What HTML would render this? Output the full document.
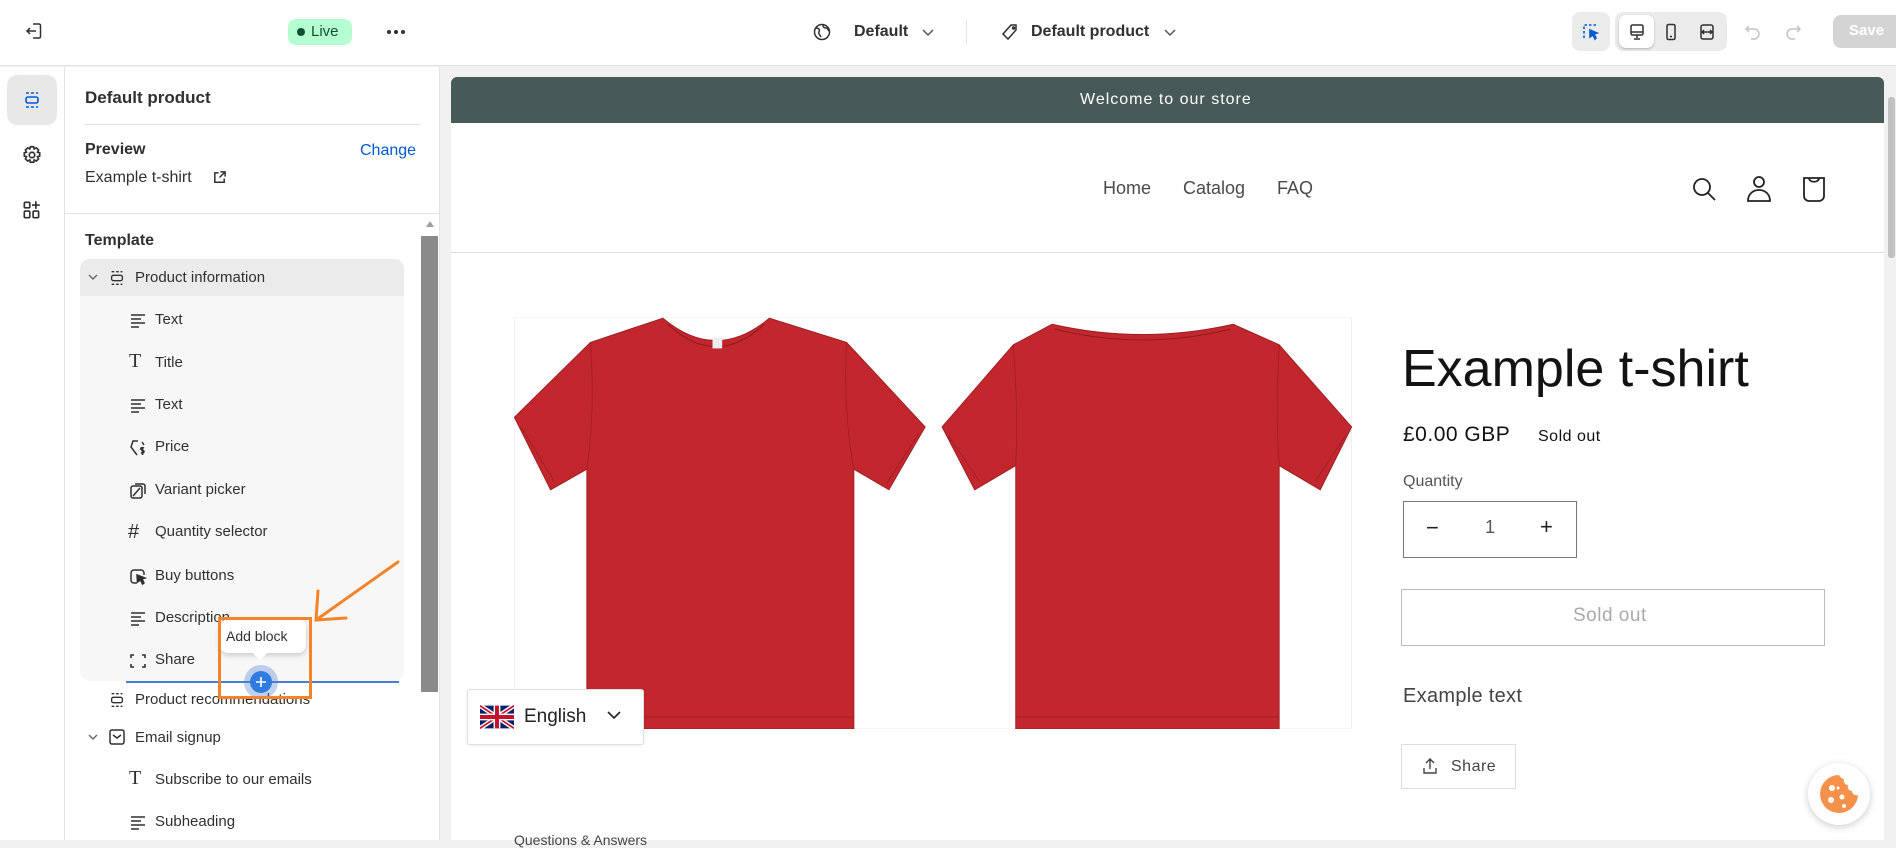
<!DOCTYPE html>
<html><head><meta charset="utf-8"><style>
*{box-sizing:border-box;margin:0;padding:0}
body{width:1896px;height:840px;overflow:hidden;background:#f1f1f1;font-family:"Liberation Sans",sans-serif;color:#303030;position:relative}
.a{position:absolute}
.t{position:absolute;white-space:nowrap}
svg{display:block}
.ico{position:absolute}
.it{position:absolute;font-size:15px;color:#303030;white-space:nowrap}
.sf{font-family:"Liberation Sans",sans-serif;color:#4a4a4a}
</style></head><body>
<!-- top bar -->
<div class="a" style="left:0;top:0;width:1896px;height:66px;background:#fff;border-bottom:1px solid #e3e3e3"></div>
<svg class="ico" style="left:24px;top:21px" width="20" height="20" viewBox="0 0 20 20" fill="none" stroke="#303030" stroke-width="1.5"><path d="M9 3h6a1.5 1.5 0 0 1 1.5 1.5v11A1.5 1.5 0 0 1 15 17H9"/><path d="M12 10H3M6 7l-3 3 3 3"/></svg>
<div class="a" style="left:288px;top:19px;width:64px;height:26px;background:#b4fed2;border-radius:8px"></div>
<div class="a" style="left:297px;top:28px;width:8px;height:8px;border-radius:50%;background:#0c5132"></div>
<div class="t" style="left:311px;top:23px;font-size:15px;color:#0c5132">Live</div>
<div class="a" style="left:387px;top:30px;width:4px;height:4px;border-radius:50%;background:#303030"></div>
<div class="a" style="left:394px;top:30px;width:4px;height:4px;border-radius:50%;background:#303030"></div>
<div class="a" style="left:401px;top:30px;width:4px;height:4px;border-radius:50%;background:#303030"></div>
<svg class="ico" style="left:812px;top:22px" width="20" height="20" viewBox="0 0 20 20" fill="none" stroke="#303030" stroke-width="1.5"><circle cx="10" cy="10" r="7.5"/><path d="M4 6c3 0 4 2 3 4s1 3 2 5M11 3c0 2 1 3 3 3s2 2 3 3"/></svg>
<div class="t" style="left:854px;top:23px;font-size:16px;font-weight:bold">Default</div>
<svg class="ico" style="left:921px;top:28px" width="14" height="10" viewBox="0 0 14 10" fill="none" stroke="#555" stroke-width="1.5"><path d="M2 2l5 5 5-5"/></svg>
<div class="a" style="left:966px;top:20px;width:1px;height:24px;background:#e3e3e3"></div>
<svg class="ico" style="left:1000px;top:22px" width="20" height="20" viewBox="0 0 20 20" fill="none" stroke="#303030" stroke-width="1.5"><path d="M11 3h5v5l-8 9-5-5z"/><circle cx="13.5" cy="6" r="1"/></svg>
<div class="t" style="left:1031px;top:23px;font-size:16px;font-weight:bold">Default product</div>
<svg class="ico" style="left:1163px;top:28px" width="14" height="10" viewBox="0 0 14 10" fill="none" stroke="#555" stroke-width="1.5"><path d="M2 2l5 5 5-5"/></svg>
<div class="a" style="left:1572px;top:12px;width:38px;height:39px;background:#ebebeb;border-radius:8px"></div>
<svg class="ico" style="left:1581px;top:22px" width="20" height="20" viewBox="0 0 20 20" fill="none" stroke="#005bd3" stroke-width="1.6" stroke-dasharray="2.5 2"><path d="M3 16V3h13"/><path d="M9 8l7 3-3 1 2 4-1 1-2-4-3 2z" fill="#005bd3" stroke-dasharray="0"/></svg>
<div class="a" style="left:1615px;top:12px;width:112px;height:39px;background:#ebebeb;border-radius:8px"></div>
<div class="a" style="left:1619px;top:15px;width:35px;height:33px;background:#fff;border-radius:7px;box-shadow:0 1px 2px rgba(0,0,0,.25)"></div>
<svg class="ico" style="left:1627px;top:22px" width="20" height="20" viewBox="0 0 20 20" fill="none" stroke="#303030" stroke-width="1.5"><rect x="4" y="3" width="12" height="10" rx="1.5"/><path d="M4 10h12M10 13v3M7 17h6"/></svg>
<svg class="ico" style="left:1661px;top:22px" width="20" height="20" viewBox="0 0 20 20" fill="none" stroke="#303030" stroke-width="1.5"><rect x="6" y="2.5" width="8" height="15" rx="1.5"/><path d="M9 14.5h2"/></svg>
<svg class="ico" style="left:1697px;top:22px" width="20" height="20" viewBox="0 0 20 20" fill="none" stroke="#303030" stroke-width="1.5"><rect x="4" y="3" width="12" height="14" rx="2"/><path d="M4 10h12M7 8l-2 2 2 2M13 8l2 2-2 2"/></svg>
<svg class="ico" style="left:1744px;top:22px" width="18" height="20" viewBox="0 0 18 20" fill="none" stroke="#c4c4c4" stroke-width="1.5"><path d="M5 4L2 7l3 3M2 7h8a5 5 0 0 1 0 10H7"/></svg>
<svg class="ico" style="left:1784px;top:22px" width="18" height="20" viewBox="0 0 18 20" fill="none" stroke="#c4c4c4" stroke-width="1.5"><path d="M13 4l3 3-3 3M16 7H8a5 5 0 0 0 0 10h3"/></svg>
<div class="a" style="left:1833px;top:15px;width:70px;height:33px;background:#d4d4d4;border-radius:8px"></div>
<div class="t" style="left:1849px;top:22px;font-size:15px;font-weight:bold;color:#fff">Save</div>

<!-- left rail -->
<div class="a" style="left:0;top:67px;width:65px;height:773px;background:#fff;border-right:1px solid #e3e3e3"></div>
<div class="a" style="left:7px;top:75px;width:50px;height:50px;background:#e8e8e8;border-radius:10px"></div>
<svg class="ico" style="left:22px;top:90px" width="20" height="20" viewBox="0 0 20 20" fill="none" stroke="#005bd3" stroke-width="1.6"><path d="M4 3h12M4 17h12" stroke-dasharray="3 2"/><rect x="4" y="7" width="12" height="6" rx="2"/></svg>
<svg class="ico" style="left:21px;top:144px" width="22" height="22" viewBox="0 0 20 20" fill="none" stroke="#303030" stroke-width="1.5"><circle cx="10" cy="10" r="2.5"/><path d="M8.5 2.5h3l.5 2 2-1 2 2-1 2 2 .5v3l-2 .5 1 2-2 2-2-1-.5 2h-3l-.5-2-2 1-2-2 1-2-2-.5v-3l2-.5-1-2 2-2 2 1z"/></svg>
<svg class="ico" style="left:21px;top:199px" width="22" height="22" viewBox="0 0 20 20" fill="none" stroke="#303030" stroke-width="1.5"><rect x="3" y="3" width="5" height="5" rx="1"/><rect x="3" y="11" width="5" height="6" rx="1"/><rect x="11" y="11" width="5" height="6" rx="1"/><path d="M13.5 2v7M10 5.5h7"/></svg>

<!-- panel -->
<div class="a" style="left:65px;top:67px;width:375px;height:773px;background:#fff;border-right:1px solid #e3e3e3"></div>
<div class="t" style="left:85px;top:88px;font-size:17px;font-weight:bold;color:#303030">Default product</div>
<div class="a" style="left:85px;top:124px;width:335px;height:1px;background:#e3e3e3"></div>
<div class="t" style="left:85px;top:141px;font-size:16px;font-weight:bold">Preview</div>
<div class="t" style="left:360px;top:142px;font-size:16px;color:#005bd3">Change</div>
<div class="t" style="left:85px;top:169px;font-size:16px">Example t-shirt</div>
<svg class="ico" style="left:212px;top:170px" width="15" height="15" viewBox="0 0 16 16" fill="none" stroke="#303030" stroke-width="1.6"><path d="M7 3H3v10h10V9M9 2h5v5M14 2L8 8"/></svg>
<div class="a" style="left:65px;top:213px;width:374px;height:1px;background:#e3e3e3"></div>
<div class="t" style="left:85px;top:232px;font-size:16px;font-weight:bold">Template</div>
<!-- scrollbar -->
<div class="a" style="left:421px;top:214px;width:17px;height:626px;background:#fff"></div>
<div class="a" style="left:426px;top:221px;width:0;height:0;border-left:4px solid transparent;border-right:4px solid transparent;border-bottom:6px solid #a0a0a0"></div>
<div class="a" style="left:421px;top:236px;width:17px;height:456px;background:#8a8a8a"></div>
<!-- group -->
<div class="a" style="left:80px;top:259px;width:324px;height:422px;background:#f7f7f7;border-radius:10px"></div>
<div class="a" style="left:80px;top:259px;width:324px;height:37px;background:#ebebeb;border-radius:10px 10px 0 0"></div>
<svg class="ico" style="left:87px;top:273px" width="12" height="10" viewBox="0 0 12 10" fill="none" stroke="#666" stroke-width="1.4"><path d="M2 2l4 4 4-4"/></svg>
<svg class="ico" style="left:108px;top:268px" width="18" height="20" viewBox="0 0 20 20" fill="none" stroke="#303030" stroke-width="1.5"><path d="M4 3h12M4 17h12" stroke-dasharray="3 2"/><rect x="4" y="7" width="12" height="6" rx="2"/></svg>
<div class="it" style="left:135px;top:269px">Product information</div>

<svg class="ico" style="left:129px;top:312px" width="18" height="18" viewBox="0 0 18 18" fill="none" stroke="#303030" stroke-width="1.6"><path d="M2 3h14M2 7h10M2 11h14M2 15h8"/></svg>
<div class="it" style="left:155px;top:311px">Text</div>
<div class="t" style="left:129px;top:350px;font-size:20px;font-family:'Liberation Serif',serif">T</div>
<div class="it" style="left:155px;top:354px">Title</div>
<svg class="ico" style="left:129px;top:397px" width="18" height="18" viewBox="0 0 18 18" fill="none" stroke="#303030" stroke-width="1.6"><path d="M2 3h14M2 7h10M2 11h14M2 15h8"/></svg>
<div class="it" style="left:155px;top:396px">Text</div>
<svg class="ico" style="left:129px;top:439px" width="18" height="18" viewBox="0 0 18 18" fill="none" stroke="#303030" stroke-width="1.5"><path d="M9 2H4L2 8l6 8M13 3l2 3"/><path d="M15 9c-2-1-4 0-3 1.5s3 .5 3 2-2 2-3 1M13.5 8v8"/></svg>
<div class="it" style="left:155px;top:438px">Price</div>
<svg class="ico" style="left:129px;top:482px" width="18" height="18" viewBox="0 0 18 18" fill="none" stroke="#303030" stroke-width="1.5"><rect x="2" y="4" width="11" height="12" rx="2"/><path d="M6 2h8a2 2 0 0 1 2 2v8M4 14l7-8"/></svg>
<div class="it" style="left:155px;top:481px">Variant picker</div>
<div class="t" style="left:128px;top:521px;font-size:20px">#</div>
<div class="it" style="left:155px;top:523px">Quantity selector</div>
<svg class="ico" style="left:129px;top:568px" width="18" height="18" viewBox="0 0 18 18" fill="none" stroke="#303030" stroke-width="1.5"><path d="M8 15H5a3 3 0 0 1-3-3V5a3 3 0 0 1 3-3h7a3 3 0 0 1 3 3v2"/><path d="M8 7l8 3-3 1 2 4-1.5 1-2-4-3 2z" fill="#303030"/></svg>
<div class="it" style="left:155px;top:567px">Buy buttons</div>
<svg class="ico" style="left:129px;top:610px" width="18" height="18" viewBox="0 0 18 18" fill="none" stroke="#303030" stroke-width="1.6"><path d="M2 3h14M2 7h10M2 11h14M2 15h8"/></svg>
<div class="it" style="left:155px;top:609px">Description</div>
<svg class="ico" style="left:129px;top:652px" width="18" height="18" viewBox="0 0 18 18" fill="none" stroke="#303030" stroke-width="1.6"><path d="M2 6V3h3M13 3h3v3M16 12v3h-3M5 15H2v-3"/></svg>
<div class="it" style="left:155px;top:651px">Share</div>

<div class="a" style="left:126px;top:681px;width:273px;height:2px;background:#4a7fd0"></div>
<svg class="ico" style="left:108px;top:690px" width="18" height="20" viewBox="0 0 20 20" fill="none" stroke="#303030" stroke-width="1.5"><path d="M4 3h12M4 17h12" stroke-dasharray="3 2"/><rect x="4" y="7" width="12" height="6" rx="2"/></svg>
<div class="it" style="left:135px;top:691px">Product recommendations</div>
<svg class="ico" style="left:87px;top:733px" width="12" height="10" viewBox="0 0 12 10" fill="none" stroke="#666" stroke-width="1.4"><path d="M2 2l4 4 4-4"/></svg>
<svg class="ico" style="left:108px;top:728px" width="18" height="18" viewBox="0 0 18 18" fill="none" stroke="#303030" stroke-width="1.5"><rect x="2" y="2" width="14" height="14" rx="2"/><path d="M5 7l4 3 4-3"/></svg>
<div class="it" style="left:135px;top:729px">Email signup</div>
<div class="t" style="left:129px;top:767px;font-size:20px;font-family:'Liberation Serif',serif">T</div>
<div class="it" style="left:155px;top:771px">Subscribe to our emails</div>
<svg class="ico" style="left:129px;top:814px" width="18" height="18" viewBox="0 0 18 18" fill="none" stroke="#303030" stroke-width="1.6"><path d="M2 3h14M2 7h10M2 11h14M2 15h8"/></svg>
<div class="it" style="left:155px;top:813px">Subheading</div>

<!-- tooltip & add -->
<div class="a" style="left:220px;top:619px;width:86px;height:34px;background:#fff;border-radius:8px;box-shadow:0 2px 6px rgba(0,0,0,.2)"></div>
<div class="a" style="left:255px;top:648px;width:10px;height:10px;background:#fff;transform:rotate(45deg)"></div>
<div class="t" style="left:226px;top:628px;font-size:14px">Add block</div>
<div class="a" style="left:244px;top:665px;width:34px;height:34px;border-radius:50%;background:rgba(74,127,208,.35)"></div>
<svg class="ico" style="left:250px;top:671px" width="22" height="22" viewBox="0 0 22 22"><circle cx="11" cy="11" r="11" fill="#2f7be0"/><path d="M11 6v10M6 11h10" stroke="#fff" stroke-width="1.6"/></svg>
<div class="a" style="left:218px;top:617px;width:94px;height:82px;border:3px solid #f5832a"></div>
<svg class="ico" style="left:300px;top:555px" width="110" height="70" viewBox="300 555 110 70" fill="none" stroke="#f5832a" stroke-width="3" stroke-linecap="round"><path d="M398 562L316 620M318 591L316 620L346 618"/></svg>

<!-- preview -->
<div class="a" style="left:451px;top:77px;width:1433px;height:763px;background:#fff"></div>
<div class="a" style="left:451px;top:77px;width:1433px;height:46px;background:#475a58;border-radius:6px 6px 0 0"></div>
<div class="t" style="left:1080px;top:91px;font-size:16px;color:#fff;letter-spacing:1px">Welcome to our store</div>
<div class="t sf" style="left:1103px;top:178px;font-size:18px">Home</div>
<div class="t sf" style="left:1183px;top:178px;font-size:18px">Catalog</div>
<div class="t sf" style="left:1277px;top:178px;font-size:18px">FAQ</div>
<svg class="ico" style="left:1690px;top:175px" width="28" height="28" viewBox="0 0 28 28" fill="none" stroke="#222" stroke-width="1.8"><circle cx="12" cy="12" r="8"/><path d="M18 18l7 7"/></svg>
<svg class="ico" style="left:1745px;top:174px" width="28" height="30" viewBox="0 0 28 30" fill="none" stroke="#222" stroke-width="1.8"><circle cx="14" cy="8" r="5"/><path d="M3 27c0-7 5-11 11-11s11 4 11 11z"/></svg>
<svg class="ico" style="left:1800px;top:174px" width="28" height="30" viewBox="0 0 28 30" fill="none" stroke="#222" stroke-width="1.8"><path d="M4 4h20v18a5 5 0 0 1-5 5H9a5 5 0 0 1-5-5z"/><path d="M9 4c0 5 10 5 10 0"/></svg>
<div class="a" style="left:451px;top:252px;width:1433px;height:1px;background:#dcdcdc"></div>
<!-- right scrollbar -->
<div class="a" style="left:1886px;top:77px;width:10px;height:763px;background:#f1f1f1"></div>
<div class="a" style="left:1888px;top:97px;width:7px;height:161px;background:#c1c1c1;border-radius:3px"></div>

<!-- images -->
<svg class="ico" style="left:514px;top:317px" width="838" height="412" viewBox="425 262 693 341">
<rect x="425" y="262" width="693" height="341" fill="#fff" stroke="#f0f0f0" stroke-width="1"/>
<path d="M548,263 Q592,300 636,263 L700,283 L765,353 L735,405 L706,388 L706,603 L485,603 L485,388 L455,405 L425,345 L488,283 Z" fill="#c1272d" stroke="#9e1f24" stroke-width=".8"/>
<path d="M552,268 Q592,305 632,268" fill="none" stroke="#8f1a1f" stroke-width=".8"/>
<path d="M488,283 Q492,340 485,388 M700,283 Q697,340 706,388 M430,352 L458,398 M760,358 L733,400 M485,593 L706,593" fill="none" stroke="#9e1f24" stroke-width=".7"/>
<rect x="589" y="279" width="8" height="9" fill="#eee"/>
<path d="M870,268 Q945,285 1020,268 L1058,285 L1118,353 L1092,405 L1058,385 L1058,603 L840,603 L840,385 L806,405 L779,353 L838,285 Z" fill="#c1272d" stroke="#9e1f24" stroke-width=".8"/>
<path d="M872,272 Q945,290 1018,272" fill="none" stroke="#8f1a1f" stroke-width=".7"/>
<path d="M838,285 Q842,340 840,385 M1058,285 Q1055,340 1058,385 M784,360 L810,398 M1113,360 L1088,398 M840,593 L1058,593" fill="none" stroke="#9e1f24" stroke-width=".7"/>
</svg>

<!-- language selector -->
<div class="a" style="left:467px;top:689px;width:177px;height:56px;background:#fff;border:1px solid #e0e0e0;border-radius:3px;box-shadow:0 1px 3px rgba(0,0,0,.08)"></div>
<svg class="ico" style="left:480px;top:704px" width="34" height="26" viewBox="0 0 60 40"><rect width="60" height="40" rx="4" fill="#012169"/><path d="M0 0L60 40M60 0L0 40" stroke="#fff" stroke-width="8"/><path d="M0 0L60 40M60 0L0 40" stroke="#c8102e" stroke-width="3"/><path d="M30 0v40M0 20h60" stroke="#fff" stroke-width="12"/><path d="M30 0v40M0 20h60" stroke="#c8102e" stroke-width="7"/></svg>
<div class="t sf" style="left:524px;top:706px;font-size:19px;color:#222">English</div>
<svg class="ico" style="left:606px;top:709px" width="16" height="12" viewBox="0 0 16 12" fill="none" stroke="#222" stroke-width="1.6"><path d="M2 3l6 6 6-6"/></svg>

<!-- product info -->
<div class="t sf" style="left:1402px;top:339px;font-size:52px;color:#121212">Example t-shirt</div>
<div class="t sf" style="left:1403px;top:423px;font-size:21px;color:#121212;letter-spacing:.5px">£0.00 GBP</div>
<div class="t sf" style="left:1538px;top:428px;font-size:16px;color:#121212;letter-spacing:.5px">Sold out</div>
<div class="t sf" style="left:1403px;top:473px;font-size:16px;color:#555">Quantity</div>
<div class="a" style="left:1403px;top:501px;width:174px;height:57px;border:1px solid #777"></div>
<div class="t sf" style="left:1426px;top:515px;font-size:22px;color:#222">−</div>
<div class="t sf" style="left:1485px;top:517px;font-size:18px;color:#555">1</div>
<div class="t sf" style="left:1540px;top:514px;font-size:22px;color:#222">+</div>
<div class="a" style="left:1401px;top:589px;width:424px;height:57px;border:1px solid #bbb"></div>
<div class="t sf" style="left:1573px;top:605px;font-size:19px;color:#aaa;letter-spacing:.5px">Sold out</div>
<div class="t sf" style="left:1403px;top:685px;font-size:20px;color:#444;letter-spacing:.3px">Example text</div>
<div class="a" style="left:1401px;top:744px;width:115px;height:45px;border:1px solid #ddd"></div>
<svg class="ico" style="left:1422px;top:757px" width="16" height="18" viewBox="0 0 16 18" fill="none" stroke="#444" stroke-width="1.4"><path d="M8 12V2M4 6l4-4 4 4M2 11v5h12v-5"/></svg>
<div class="t sf" style="left:1451px;top:758px;font-size:16px;color:#444;letter-spacing:.5px">Share</div>
<div class="t sf" style="left:514px;top:832px;font-size:14px;color:#444">Questions &amp; Answers</div>

<!-- cookie -->
<div class="a" style="left:1808px;top:763px;width:62px;height:62px;border-radius:50%;background:#fff;box-shadow:0 2px 8px rgba(0,0,0,.2)"></div>
<svg class="ico" style="left:1817px;top:772px" width="44" height="44" viewBox="0 0 44 44"><path d="M22 3a19 19 0 1 0 19 20c-3 1-6-1-6-4-3 0-5-3-4-6-3 0-5-3-4-6-2 0-4-2-5-4z" fill="#f5914a"/><circle cx="15" cy="16" r="3" fill="#fff"/><circle cx="14" cy="28" r="3" fill="#fff"/><circle cx="25" cy="25" r="2.5" fill="#fff"/><circle cx="27" cy="34" r="2" fill="#fff"/><circle cx="21" cy="16" r="1.5" fill="#fff"/></svg>
</body></html>
